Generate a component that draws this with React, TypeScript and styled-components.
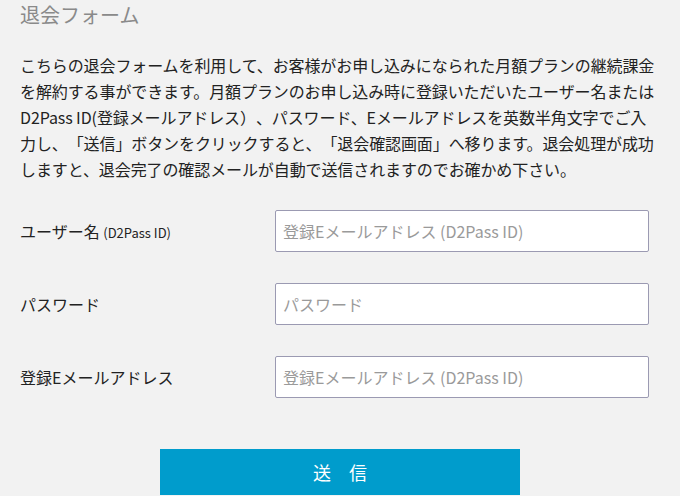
import React from "react";
import styled, { createGlobalStyle } from "styled-components";

const Global = createGlobalStyle`
  html, body { margin: 0; padding: 0; background: #f2f2f2; }
  body { font-family: "Noto Sans CJK JP", "Noto Sans", sans-serif; color: #222; text-spacing-trim: space-all; }
`;

const Page = styled.div`
  padding: 0 20px;
  width: 640px;
`;

const Title = styled.h1`
  margin: 0;
  font-size: 20px;
  line-height: 30px;
  font-weight: 400;
  color: #8a8a8a;
`;

const Intro = styled.p`
  margin: 22px 0 0;
  font-size: 16px;
  line-height: 26px;
  color: #222;
  white-space: nowrap;
  letter-spacing: -0.1px;
`;

const Form = styled.form`
  margin-top: 28px;
  display: flex;
  flex-direction: column;
  gap: 31px;
`;

const Row = styled.div`
  display: grid;
  grid-template-columns: 255px 374px;
  align-items: center;
`;

const Label = styled.label`
  font-size: 16px;
  color: #222;
`;

const Small = styled.span`
  font-size: 13px;
`;

const Input = styled.input`
  box-sizing: border-box;
  width: 374px;
  height: 42px;
  border: 1px solid #9b9ab2;
  border-radius: 2px;
  background: #fff;
  padding: 0 7px;
  font-family: inherit;
  font-size: 16px;
  color: #333;
  outline: none;
  &::placeholder { color: #9a9a9a; }
`;

const Submit = styled.button`
  display: block;
  margin: 20px auto 0;
  width: 360px;
  height: 46px;
  border: none;
  background: #009ccc;
  color: #fff;
  font-family: inherit;
  font-size: 18px;
  letter-spacing: 0;
  cursor: pointer;
`;

export default function App() {
  return (
    <>
      <Global />
      <Page>
        <Title>退会フォーム</Title>
        <Intro>
          こちらの退会フォームを利用して、お客様がお申し込みになられた月額プランの継続課金
          <br />
          を解約する事ができます。月額プランのお申し込み時に登録いただいたユーザー名または
          <br />
          D2Pass ID(登録メールアドレス）、パスワード、Eメールアドレスを英数半角文字でご入
          <br />
          力し、「送信」ボタンをクリックすると、「退会確認画面」へ移ります。退会処理が成功
          <br />
          しますと、退会完了の確認メールが自動で送信されますのでお確かめ下さい。
        </Intro>
        <Form onSubmit={(e) => e.preventDefault()}>
          <Row>
            <Label htmlFor="user">
              ユーザー名 <Small>(D2Pass ID)</Small>
            </Label>
            <Input id="user" placeholder="登録Eメールアドレス (D2Pass ID)" />
          </Row>
          <Row>
            <Label htmlFor="pass">パスワード</Label>
            <Input id="pass" type="password" placeholder="パスワード" />
          </Row>
          <Row>
            <Label htmlFor="mail">登録Eメールアドレス</Label>
            <Input id="mail" placeholder="登録Eメールアドレス (D2Pass ID)" />
          </Row>
          <Submit type="submit">送　信</Submit>
        </Form>
      </Page>
    </>
  );
}
